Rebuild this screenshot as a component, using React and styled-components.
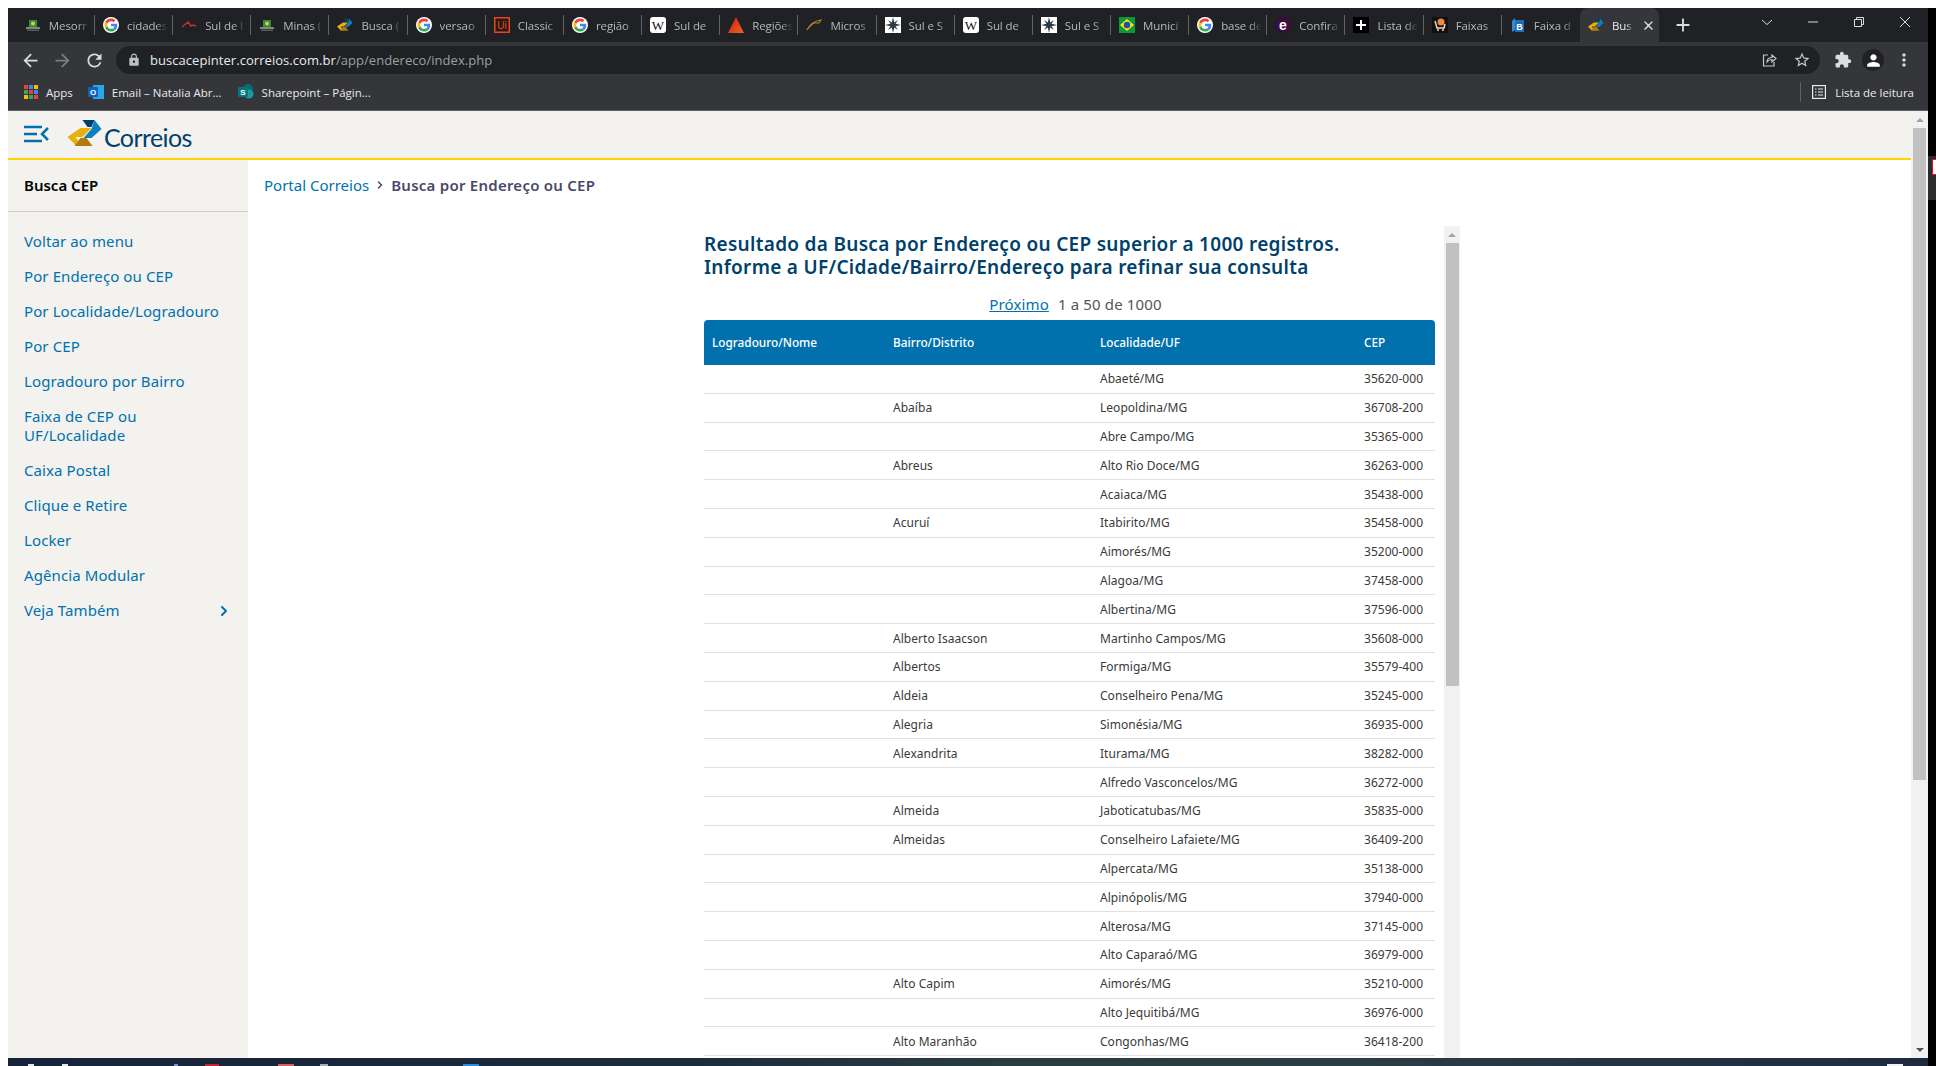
import React from 'react'
import styled, { createGlobalStyle } from 'styled-components'
import { MdArrowBack, MdArrowForward, MdRefresh, MdLock, MdExtension, MdMoreVert, MdStarBorder, MdPerson, MdClose, MdAdd } from 'react-icons/md'
import { ChevronRight } from 'lucide-react'

const UI_FONT = '"Open Sans", "Noto Sans", sans-serif'
const SITE_FONT = '"Noto Sans", "Open Sans", sans-serif'

const GlobalStyle = createGlobalStyle`
  html, body { margin: 0; padding: 0; height: 100%; background: #fff; overflow: hidden; }
  #root { height: 100%; }
  * { box-sizing: border-box; }
`

const Desktop = styled.div`
  display: flex;
  height: 1066px;
  padding: 8px 0 0 8px;
  background: #fff;
`
const DesktopColumn = styled.div`
  display: flex;
  flex-direction: column;
  width: 1920px;
  min-width: 0;
`
const BehindWindow = styled.div`
  display: flex;
  flex-direction: column;
  width: 8px;
  background: #000;
`
const BehindTop = styled.div`
  height: 148px;
`
const BehindApp = styled.div`
  height: 44px;
  padding: 3px 0 0 4px;
  background: #2b2b2b;
`
const RedBadge = styled.div`
  width: 8px;
  height: 16px;
  background: #fff;
  border: 1px solid #e81123;
  border-right: 0;
`

/* tab strip */
const TabStrip = styled.div`
  display: flex;
  align-items: stretch;
  height: 34px;
  padding-left: 8.84px;
  background: #202124;
  font-family: ${UI_FONT};
  flex: none;
`
const Tab = styled.div`
  position: relative;
  display: flex;
  align-items: center;
  flex: none;
  width: ${p => (p.$active ? '79px' : '78.16px')};
  padding-left: 8px;
  gap: 8px;
  height: 34px;
  color: ${p => (p.$active ? '#e8eaed' : '#b5b8bc')};
  background: ${p => (p.$active ? '#35363a' : 'transparent')};
  border-radius: ${p => (p.$active ? '8px 8px 0 0' : '0')};
  &::after {
    content: '';
    display: ${p => (p.$last || p.$active ? 'none' : 'block')};
    position: absolute;
    right: 0;
    top: 7px;
    width: 1px;
    height: 20px;
    background: #5f6368;
  }
`
const TabTitle = styled.span`
  width: ${p => (p.$active ? '21px' : '41px')};
  overflow: hidden;
  white-space: nowrap;
  font-size: 11.5px;
  letter-spacing: -0.1px;
  -webkit-mask-image: linear-gradient(90deg, #000 70%, transparent 100%);
  mask-image: linear-gradient(90deg, #000 70%, transparent 100%);
`
const TabClose = styled(MdClose)`
  font-size: 15px;
  color: #e8eaed;
`
const NewTab = styled(MdAdd)`
  align-self: center;
  margin-left: 13px;
  font-size: 22px;
  color: #dadce0;
`
const WindowControls = styled.div`
  display: flex;
  align-items: flex-start;
  margin-left: auto;
  height: 100%;
`
const WindowButton = styled.div`
  display: flex;
  align-items: center;
  justify-content: center;
  width: 46px;
  height: 30px;
  margin-top: -1px;
  color: #dadce0;
`

/* address bar */
const Toolbar = styled.div`
  display: flex;
  align-items: center;
  flex: none;
  height: 36px;
  padding-left: 6px;
  background: #35363a;
`
const NavButton = styled.div`
  display: flex;
  justify-content: center;
  width: 32px;
  font-size: 21px;
  color: ${p => (p.$off ? '#7c7e83' : '#dadce0')};
`
const Omnibox = styled.div`
  display: flex;
  align-items: center;
  flex: none;
  width: 1704px;
  height: 28px;
  margin-left: 6px;
  padding: 0 11px;
  border-radius: 14px;
  background: #202124;
  font-family: ${UI_FONT};
  font-size: 13px;
  letter-spacing: 0.05px;
`
const LockIcon = styled(MdLock)`
  font-size: 14px;
  color: #bdc1c6;
  margin-right: 9px;
  flex: none;
`
const Host = styled.span`
  color: #e8eaed;
`
const UrlPath = styled.span`
  color: #9aa0a6;
`
const OmniActions = styled.div`
  display: flex;
  align-items: center;
  gap: 16px;
  margin-left: auto;
  margin-right: -2px;
  color: #c4c7cb;
`
const ToolActions = styled.div`
  display: flex;
  align-items: center;
  margin-left: 14px;
  gap: 10px;
  color: #dadce0;
`
const Avatar = styled.div`
  display: flex;
  align-items: center;
  justify-content: center;
  width: 22px;
  height: 22px;
  border-radius: 50%;
  background: #202124;
  font-size: 19px;
  color: #fff;
`

/* bookmarks */
const BookmarkBar = styled.div`
  display: flex;
  align-items: center;
  flex: none;
  height: 33px;
  padding: 0 14px 4px 16px;
  background: #35363a;
  border-bottom: 1px solid #5f6368;
  font-family: ${UI_FONT};
  font-size: 11.5px;
  color: #e8eaed;
`
const Bookmark = styled.div`
  display: flex;
  align-items: center;
  gap: 8px;
  margin-right: ${p => p.$gap || 16}px;
  white-space: nowrap;
`
const ReadingList = styled.div`
  display: flex;
  align-items: center;
  gap: 9px;
  margin-left: auto;
  padding-left: 11px;
  height: 20px;
  border-left: 1px solid #5f6368;
`

/* page */
const Viewport = styled.div`
  display: flex;
  flex: 1;
  min-height: 0;
`
const Page = styled.div`
  display: flex;
  flex-direction: column;
  flex: 1;
  min-width: 0;
  background: #fff;
  font-family: ${SITE_FONT};
`
const SiteHeader = styled.header`
  display: flex;
  align-items: center;
  flex: none;
  height: 49px;
  padding-left: 16px;
  background: #f3f2ef;
  border-bottom: 2px solid #ffd400;
`
const MenuToggle = styled.svg`
  width: 25px;
  height: 18px;
  margin-right: 17px;
  margin-top: -1px;
`
const LogoMark = styled.svg`
  width: 38px;
  height: 27px;
  margin-top: -2px;
`
const LogoWord = styled.span`
  margin-top: 5px;
  font-family: "Lato", "Open Sans", sans-serif;
  font-size: 25px;
  line-height: 30px;
  letter-spacing: -0.6px;
  color: #00416b;
`
const PageBody = styled.div`
  display: flex;
  flex: 1;
  min-height: 0;
`
const Sidebar = styled.aside`
  flex: none;
  width: 240px;
  background: #f3f2ef;
`
const SidebarTitle = styled.div`
  height: 52px;
  padding: 15px 16px 0;
  border-bottom: 1px solid #cfcdca;
  font-size: 15px;
  line-height: 20px;
  font-weight: 600;
  color: #000;
`
const SideMenu = styled.nav`
  padding-top: 12px;
`
const SideLink = styled.a`
  display: flex;
  align-items: center;
  justify-content: space-between;
  padding: 8px 16px;
  font-size: 15px;
  letter-spacing: 0.1px;
  line-height: 19px;
  color: #0071ad;
`
const Main = styled.main`
  display: flex;
  flex-direction: column;
  flex: 1;
  min-width: 0;
`
const Breadcrumb = styled.div`
  display: flex;
  align-items: center;
  flex: none;
  height: 66px;
  padding: 0 0 17px 16px;
  font-size: 15px;
`
const CrumbLink = styled.a`
  color: #0071ad;
`
const CrumbSeparator = styled(ChevronRight)`
  margin: 0 5px;
  color: #4a4a68;
`
const CrumbCurrent = styled.strong`
  color: #4a4a68;
  font-weight: 600;
  letter-spacing: 0.25px;
`
const ResultFrame = styled.section`
  display: flex;
  flex: 1;
  min-height: 0;
  margin-left: 456px;
  width: 756px;
  overflow: hidden;
`
const ResultContent = styled.div`
  flex: none;
  width: 731px;
  padding-top: 7px;
`
const ResultTitle = styled.h2`
  margin: 0;
  font-size: 19px;
  line-height: 23px;
  font-weight: 600;
  letter-spacing: 0.3px;
  color: #00416b;
  white-space: nowrap;
`
const Pager = styled.div`
  margin-top: 15px;
  padding-left: 12px;
  text-align: center;
  font-size: 15px;
  letter-spacing: 0.15px;
  line-height: 20px;
  color: #555;
`
const PagerLink = styled.a`
  margin-right: 9px;
  color: #0071ad;
  text-decoration: underline;
`
const Grid = styled.div`
  margin-top: 6px;
`
const HeadRow = styled.div`
  display: grid;
  grid-template-columns: 181px 207px 264px 79px;
  align-items: center;
  height: 45px;
  padding-bottom: 2px;
  background: #0071ad;
  border-radius: 4px 4px 0 0;
  color: #fff;
  font-size: 11.8px;
  font-weight: 500;
`
const Row = styled.div`
  display: grid;
  grid-template-columns: 181px 207px 264px 79px;
  align-items: center;
  height: 28.8px;
  border-bottom: 1px solid #e0e0e0;
  font-size: 12px;
  letter-spacing: 0.03px;
  color: #3a3a3a;
`
const Cell = styled.div`
  padding-left: 8px;
  white-space: nowrap;
`

/* scrollbars */
const ScrollTrack = styled.div`
  display: flex;
  flex-direction: column;
  align-items: center;
  flex: none;
  width: ${p => p.$width}px;
  margin-left: ${p => p.$offset || 0}px;
  background: ${p => p.$color};
`
const ScrollArrow = styled.div`
  flex: none;
  height: ${p => p.$height}px;
  width: 100%;
  display: flex;
  align-items: center;
  justify-content: center;
  margin-top: ${p => (p.$end ? 'auto' : '0')};
  &::before {
    content: '';
    border-left: 4px solid transparent;
    border-right: 4px solid transparent;
    ${p => (p.$end ? 'border-top: 4px solid #505050;' : 'border-bottom: 4px solid #a3a3a3;')}
  }
`
const ScrollThumb = styled.div`
  flex: none;
  width: 13px;
  height: ${p => p.$height}px;
  background: #c1c1c1;
`

/* bottom strip */
const Taskbar = styled.div`
  display: flex;
  align-items: flex-end;
  flex: none;
  height: 8px;
  background: linear-gradient(90deg, #17233b 0%, #1c2b39 35%, #2b3b42 52%, #2c3c44 70%, #1f2a40 100%);
`
const TaskTip = styled.div`
  flex: none;
  width: ${p => p.$w}px;
  height: 2px;
  margin-left: ${p => p.$ml}px;
  background: ${p => p.$color};
`

/* favicons */
const IconSvg = styled.svg`
  flex: none;
  width: ${p => p.$size || 16}px;
  height: ${p => p.$size || 16}px;
`
const GoogleIcon = () => (
  <IconSvg viewBox="0 0 48 48">
    <circle cx="24" cy="24" r="24" fill="#fff" />
    <path fill="#EA4335" d="M24 12.5c3 0 5.6 1 7.7 3l5.7-5.7C33.9 6.500 29.400 4.500 24 4.500c-7.700 0-14.300 4.400-17.500 10.800l6.700 5.200C14.800 15.800 19 12.500 24 12.500z" />
    <path fill="#4285F4" d="M42.700 24.500c0-1.400-.1-2.700-.4-4H24v7.600h10.500c-.5 2.500-1.900 4.600-4 6l6.400 5c3.700-3.500 5.800-8.600 5.800-14.600z" />
    <path fill="#FBBC05" d="M13.200 27.500c-.4-1.100-.6-2.300-.6-3.500s.2-2.400.6-3.500l-6.700-5.200C5.200 18 4.500 20.900 4.500 24s.7 6 2 8.700l6.700-5.200z" />
    <path fill="#34A853" d="M24 43.500c5.300 0 9.700-1.700 12.900-4.800l-6.400-5c-1.700 1.200-4 1.900-6.500 1.900-5 0-9.200-3.300-10.800-8.100l-6.700 5.200C9.700 39.100 16.300 43.500 24 43.500z" />
  </IconSvg>
)
const CorreiosMark = () => (
  <>
    <polygon fill="#e9b00c" points="0,17 13,8 24,8 15,17 8,17 14,25 8,25" />
    <polygon fill="#b07a10" points="7,26 13,18 19,18 25,26" />
    <polygon fill="#00416b" points="15,0 27,0 24,7 20,7" />
    <polygon fill="#0a7fc2" points="27,0 34,9 24,18 16,18 24,9" />
  </>
)
const Favicon = ({ kind }) => {
  switch (kind) {
    case 'google':
      return <GoogleIcon />
    case 'map':
      return (
        <IconSvg viewBox="0 0 16 16">
          <rect x="4" y="3" width="8" height="7" fill="#2f8f3b" />
          <circle cx="8" cy="6.500" r="2" fill="#d9c94a" />
          <rect x="1" y="10" width="14" height="2" fill="#7d8a76" />
          <rect x="2" y="12.500" width="12" height="1.500" fill="#565c55" />
        </IconSvg>
      )
    case 'swoosh':
      return (
        <IconSvg viewBox="0 0 16 16">
          <path d="M1 10 L7 5 L10 9 L12 8 L15 9" fill="none" stroke="#c8322b" strokeWidth="1.500" />
        </IconSvg>
      )
    case 'correios':
      return (
        <IconSvg viewBox="0 0 35 27">
          <CorreiosMark />
        </IconSvg>
      )
    case 'wiki':
      return (
        <IconSvg viewBox="0 0 16 16">
          <rect width="16" height="16" rx="3" fill="#fff" />
          <text x="8" y="12.500" textAnchor="middle" fontFamily='"Liberation Serif", serif' fontSize="13" fill="#111">W</text>
        </IconSvg>
      )
    case 'uipath':
      return (
        <IconSvg viewBox="0 0 16 16">
          <rect x="0.750" y="0.750" width="14.500" height="14.500" fill="#2a1a16" stroke="#e8461e" strokeWidth="1.500" />
          <text x="8" y="12" textAnchor="middle" fontFamily='"Liberation Sans", sans-serif' fontSize="10" fill="#e8461e">Ui</text>
        </IconSvg>
      )
    case 'triangle':
      return (
        <IconSvg viewBox="0 0 16 16">
          <defs>
            <linearGradient id="redTri" x1="0" y1="0" x2="1" y2="1">
              <stop offset="0" stopColor="#c9161d" />
              <stop offset="1" stopColor="#f0661c" />
            </linearGradient>
          </defs>
          <polygon points="8,0 16,16 0,16" fill="url(#redTri)" />
        </IconSvg>
      )
    case 'feather':
      return (
        <IconSvg viewBox="0 0 16 16">
          <path d="M1 13 C4 7 8 4 15 3 L13 6 L8 6 C6 7 4 9 1 13" fill="none" stroke="#b5852c" strokeWidth="1.100" />
        </IconSvg>
      )
    case 'compass':
      return (
        <IconSvg viewBox="0 0 16 16">
          <rect width="16" height="16" fill="#fff" />
          <polygon points="8,0 9.200,5.500 13,3 10.500,6.800 16,8 10.500,9.200 13,13 9.200,10.500 8,16 6.800,10.500 3,13 5.500,9.200 0,8 5.500,6.800 3,3 6.800,5.500" fill="#2d3a45" />
        </IconSvg>
      )
    case 'brazil':
      return (
        <IconSvg viewBox="0 0 16 16">
          <rect width="16" height="16" fill="#0b9a3a" />
          <polygon points="8,2 15,8 8,14 1,8" fill="#f7df1e" />
          <circle cx="8" cy="8" r="3.200" fill="#1d4fa0" />
        </IconSvg>
      )
    case 'edge':
      return (
        <IconSvg viewBox="0 0 16 16">
          <circle cx="8" cy="8" r="8" fill="#3a0d3f" />
          <text x="8" y="12.500" textAnchor="middle" fontFamily='"Liberation Sans", sans-serif' fontWeight="700" fontSize="14" fill="#fff">e</text>
        </IconSvg>
      )
    case 'plus':
      return (
        <IconSvg viewBox="0 0 16 16">
          <rect width="16" height="16" fill="#000" />
          <path d="M8 3 V13 M3 8 H13" stroke="#fff" strokeWidth="2" />
        </IconSvg>
      )
    case 'cart':
      return (
        <IconSvg viewBox="0 0 16 16">
          <rect width="16" height="16" fill="#111" />
          <circle cx="9" cy="5" r="3.500" fill="#f08a3c" />
          <path d="M3 4 L5 11 H12 L13 7" fill="none" stroke="#f3d9c4" strokeWidth="1.500" />
          <circle cx="6" cy="13" r="1" fill="#f3d9c4" />
          <circle cx="11" cy="13" r="1" fill="#f3d9c4" />
        </IconSvg>
      )
    case 'book':
      return (
        <IconSvg viewBox="0 0 16 16">
          <path d="M2 4 L5 1 V13 L2 15 Z" fill="#2e8bd6" />
          <rect x="5" y="3" width="9" height="12" fill="#1f6fb5" />
          <text x="9.500" y="13" textAnchor="middle" fontFamily='"Liberation Sans", sans-serif' fontWeight="700" fontSize="9" fill="#fff">B</text>
        </IconSvg>
      )
    default:
      return <IconSvg viewBox="0 0 16 16" />
  }
}

const AppsIcon = () => (
  <IconSvg viewBox="0 0 14 14" $size={14}>
    {['#ea4335', '#4285f4', '#fbbc05', '#34a853', '#ea4335', '#4285f4', '#fbbc05', '#34a853', '#ea4335'].map((c, i) => (
      <rect key={i} x={(i % 3) * 5} y={Math.floor(i / 3) * 5} width="4" height="4" fill={c} />
    ))}
  </IconSvg>
)
const OutlookIcon = () => (
  <IconSvg viewBox="0 0 16 16">
    <rect x="5" y="1" width="11" height="14" fill="#28a8ea" />
    <rect x="0" y="3" width="10" height="10" rx="1" fill="#0f62b6" />
    <text x="5" y="11" textAnchor="middle" fontFamily='"Liberation Sans", sans-serif' fontWeight="700" fontSize="8" fill="#fff">O</text>
  </IconSvg>
)
const SharepointIcon = () => (
  <IconSvg viewBox="0 0 16 16">
    <circle cx="10" cy="5" r="5" fill="#036c70" />
    <circle cx="11" cy="10" r="4.500" fill="#1a9ba1" />
    <rect x="0" y="3" width="10" height="10" rx="1" fill="#03787c" />
    <text x="5" y="11" textAnchor="middle" fontFamily='"Liberation Sans", sans-serif' fontWeight="700" fontSize="8" fill="#fff">S</text>
  </IconSvg>
)
const ShareIcon = () => (
  <IconSvg viewBox="0 0 16 16" fill="none" stroke="currentColor" strokeWidth="1.200">
    <path d="M7 3 H2.500 V14 H13 V10" />
    <path d="M6 10 C6 7 8 5.500 11 5.500 V3 L15 6.500 L11 10 V7.500 C9 7.500 7.500 8 6 10 Z" />
  </IconSvg>
)
const ReadingIcon = () => (
  <IconSvg viewBox="0 0 14 14" $size={14} fill="none" stroke="#e8eaed" strokeWidth="1.200">
    <rect x="0.600" y="0.600" width="12.800" height="12.800" />
    <path d="M3 4 H4.500 M6 4 H11 M3 7 H4.500 M6 7 H11 M3 10 H4.500 M6 10 H11" />
  </IconSvg>
)
const ChromeGlyph = ({ d }) => (
  <svg width="12" height="12" viewBox="0 0 12 12" fill="none" stroke="currentColor" strokeWidth="1">
    <path d={d} />
  </svg>
)

// titles are only what the narrow tabs still show
const TABS = [
  ['map', 'Mesorr'], ['google', 'cidades'], ['swoosh', 'Sul de l'], ['map', 'Minas ('],
  ['correios', 'Busca ('], ['google', 'versao'], ['uipath', 'Classic'], ['google', 'região'],
  ['wiki', 'Sul de'], ['triangle', 'Regiões'], ['feather', 'Micros'], ['compass', 'Sul e S'],
  ['wiki', 'Sul de'], ['compass', 'Sul e S'], ['brazil', 'Municí'], ['google', 'base de'],
  ['edge', 'Confira'], ['plus', 'Lista de'], ['cart', 'Faixas'], ['book', 'Faixa d'],
]

const ROWS = [
  ['', 'Abaeté', '35620-000'], ['Abaíba', 'Leopoldina', '36708-200'], ['', 'Abre Campo', '35365-000'],
  ['Abreus', 'Alto Rio Doce', '36263-000'], ['', 'Acaiaca', '35438-000'], ['Acuruí', 'Itabirito', '35458-000'],
  ['', 'Aimorés', '35200-000'], ['', 'Alagoa', '37458-000'], ['', 'Albertina', '37596-000'],
  ['Alberto Isaacson', 'Martinho Campos', '35608-000'], ['Albertos', 'Formiga', '35579-400'],
  ['Aldeia', 'Conselheiro Pena', '35245-000'], ['Alegria', 'Simonésia', '36935-000'],
  ['Alexandrita', 'Iturama', '38282-000'], ['', 'Alfredo Vasconcelos', '36272-000'],
  ['Almeida', 'Jaboticatubas', '35835-000'], ['Almeidas', 'Conselheiro Lafaiete', '36409-200'],
  ['', 'Alpercata', '35138-000'], ['', 'Alpinópolis', '37940-000'], ['', 'Alterosa', '37145-000'],
  ['', 'Alto Caparaó', '36979-000'], ['Alto Capim', 'Aimorés', '35210-000'], ['', 'Alto Jequitibá', '36976-000'],
  ['Alto Maranhão', 'Congonhas', '36418-200'],
]

const MENU = ['Voltar ao menu', 'Por Endereço ou CEP', 'Por Localidade/Logradouro', 'Por CEP', 'Logradouro por Bairro',
  'Faixa de CEP ou UF/Localidade', 'Caixa Postal', 'Clique e Retire', 'Locker', 'Agência Modular']

const TASK_TIPS = [
  [6, 20, '#e8e8e8'], [6, 28, '#e8e8e8'], [4, 106, '#8d86d8'], [14, 27, '#c4262e'], [16, 59, '#e25b57'],
  [8, 26, '#a8adb3'], [16, 135, '#2e8bd6'], [16, 1408, '#f0f0f0'],
]

export default function App() {
  return (
    <>
      <GlobalStyle />
      <Desktop>
        <DesktopColumn>
          <TabStrip>
            {TABS.map(([kind, title], i) => (
              <Tab key={i} $last={i === TABS.length - 1}>
                <Favicon kind={kind} />
                <TabTitle>{title}</TabTitle>
              </Tab>
            ))}
            <Tab $active>
              <Favicon kind="correios" />
              <TabTitle $active>Bus</TabTitle>
              <TabClose />
            </Tab>
            <NewTab />
            <WindowControls>
              <WindowButton><ChromeGlyph d="M1 4 L6 8.500 L11 4" /></WindowButton>
              <WindowButton><ChromeGlyph d="M1 6 H11" /></WindowButton>
              <WindowButton><ChromeGlyph d="M1.500 3.500 H8.500 V10.500 H1.500 Z M3.500 3.500 V1.500 H10.500 V8.500 H8.500" /></WindowButton>
              <WindowButton><ChromeGlyph d="M1 1 L11 11 M11 1 L1 11" /></WindowButton>
            </WindowControls>
          </TabStrip>

          <Toolbar>
            <NavButton><MdArrowBack /></NavButton>
            <NavButton $off><MdArrowForward /></NavButton>
            <NavButton><MdRefresh /></NavButton>
            <Omnibox>
              <LockIcon />
              <Host>buscacepinter.correios.com.br</Host>
              <UrlPath>/app/endereco/index.php</UrlPath>
              <OmniActions>
                <ShareIcon />
                <MdStarBorder size={18} />
              </OmniActions>
            </Omnibox>
            <ToolActions>
              <MdExtension size={18} />
              <Avatar><MdPerson /></Avatar>
              <MdMoreVert size={20} />
            </ToolActions>
          </Toolbar>

          <BookmarkBar>
            <Bookmark $gap={15}><AppsIcon />Apps</Bookmark>
            <Bookmark $gap={16}><OutlookIcon />Email – Natalia Abr...</Bookmark>
            <Bookmark><SharepointIcon />Sharepoint – Págin...</Bookmark>
            <ReadingList><ReadingIcon />Lista de leitura</ReadingList>
          </BookmarkBar>

          <Viewport>
            <Page>
              <SiteHeader>
                <MenuToggle viewBox="0 0 25 18" fill="none" stroke="#0071ad" strokeWidth="2.500">
                  <path d="M0 2 H18 M0 9 H13 M0 16 H18 M24 3 L18 9 L24 15" />
                </MenuToggle>
                <LogoMark viewBox="0 0 35 27"><CorreiosMark /></LogoMark>
                <LogoWord>Correios</LogoWord>
              </SiteHeader>
              <PageBody>
                <Sidebar>
                  <SidebarTitle>Busca CEP</SidebarTitle>
                  <SideMenu>
                    {MENU.map(item => <SideLink key={item}>{item}</SideLink>)}
                    <SideLink>Veja Também<ChevronRight size={16} strokeWidth={3} /></SideLink>
                  </SideMenu>
                </Sidebar>
                <Main>
                  <Breadcrumb>
                    <CrumbLink>Portal Correios</CrumbLink>
                    <CrumbSeparator size={12} strokeWidth={3} />
                    <CrumbCurrent>Busca por Endereço ou CEP</CrumbCurrent>
                  </Breadcrumb>
                  <ResultFrame>
                    <ResultContent>
                      <ResultTitle>
                        Resultado da Busca por Endereço ou CEP superior a 1000 registros.<br />
                        Informe a UF/Cidade/Bairro/Endereço para refinar sua consulta
                      </ResultTitle>
                      <Pager><PagerLink>Próximo</PagerLink>1 a 50 de 1000</Pager>
                      <Grid>
                        <HeadRow>
                          <Cell>Logradouro/Nome</Cell>
                          <Cell>Bairro/Distrito</Cell>
                          <Cell>Localidade/UF</Cell>
                          <Cell>CEP</Cell>
                        </HeadRow>
                        {ROWS.map(([bairro, cidade, cep]) => (
                          <Row key={cep}>
                            <Cell />
                            <Cell>{bairro}</Cell>
                            <Cell>{cidade}/MG</Cell>
                            <Cell>{cep}</Cell>
                          </Row>
                        ))}
                      </Grid>
                    </ResultContent>
                    <ScrollTrack $width={16} $offset={9} $color="#f1f1f1">
                      <ScrollArrow $height={17} />
                      <ScrollThumb $height={443} />
                    </ScrollTrack>
                  </ResultFrame>
                </Main>
              </PageBody>
            </Page>
            <ScrollTrack $width={17} $color="#f1f1f1">
              <ScrollArrow $height={17} />
              <ScrollThumb $height={652} />
              <ScrollArrow $height={17} $end />
            </ScrollTrack>
          </Viewport>

          <Taskbar>
            {TASK_TIPS.map(([w, ml, color], i) => <TaskTip key={i} $w={w} $ml={ml} $color={color} />)}
          </Taskbar>
        </DesktopColumn>
        <BehindWindow>
          <BehindTop />
          <BehindApp><RedBadge /></BehindApp>
        </BehindWindow>
      </Desktop>
    </>
  )
}
